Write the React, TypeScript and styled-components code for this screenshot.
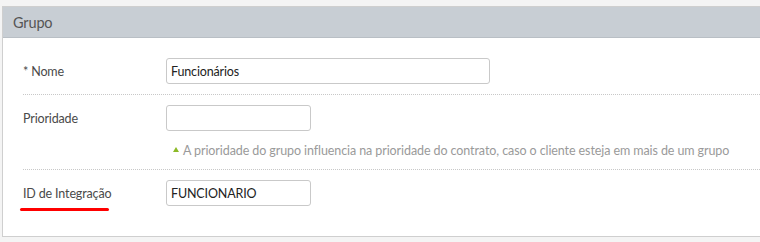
import React from "react";
import styled, { createGlobalStyle } from "styled-components";

const Global = createGlobalStyle`
  html, body { margin: 0; padding: 0; background: #f4f4f4; }
  body { font-family: "Lato", "Liberation Sans", sans-serif; letter-spacing: -0.15px; }
  * { box-sizing: border-box; }
`;

const Page = styled.div`
  padding: 6px 0 0 2px;
  overflow: hidden;
`;

const Panel = styled.section`
  background: #fff;
  border: 1px solid #cfcfcf;
  border-right: none;
`;

const Header = styled.header`
  height: 31px;
  background: #c8ced4;
  border-bottom: 1px solid #b9bfc5;
  padding-left: 10px;
  display: flex;
  align-items: center;
  font-size: 14.5px;
  color: #555;
`;

const Body = styled.div`
  padding: 10px 0 20px 20px;
`;

const Row = styled.div<{ $last?: boolean }>`
  display: grid;
  grid-template-columns: 143px 1fr;
  padding: 10px 0;
  border-bottom: ${(p) => (p.$last ? "none" : "1px dotted #c8c8c8")};
`;

const Label = styled.label`
  position: relative;
  height: 26px;
  display: flex;
  align-items: center;
  font-size: 12.5px;
  color: #4a4a4a;
`;

const Underline = styled.span`
  position: absolute;
  left: -3px;
  top: 28px;
  width: 89px;
  height: 3px;
  border-radius: 2px;
  background: #f00;
`;

const Field = styled.div`
  display: flex;
  flex-direction: column;
`;

const Input = styled.input<{ $w: number }>`
  width: ${(p) => p.$w}px;
  height: 26px;
  border: 1px solid #c9c9c9;
  border-radius: 3px;
  padding: 0 4px;
  font-family: inherit;
  letter-spacing: inherit;
  font-size: 12.5px;
  color: #222;
  background: #fff;
  outline: none;
`;

const Hint = styled.div`
  display: flex;
  align-items: center;
  gap: 4px;
  margin-top: 10px;
  padding-left: 7px;
  height: 18px;
  font-size: 12.5px;
  letter-spacing: -0.09px;
  color: #9a9a9a;
  white-space: nowrap;
`;

const Arrow = styled.span`
  width: 0;
  height: 0;
  border-left: 3.5px solid transparent;
  border-right: 3.5px solid transparent;
  border-bottom: 5px solid #8cba27;
  margin-top: -2px;
`;

export default function App() {
  return (
    <Page>
      <Global />
      <Panel>
        <Header>Grupo</Header>
        <Body>
          <Row>
            <Label>* Nome</Label>
            <Field>
              <Input $w={324} defaultValue="Funcionários" />
            </Field>
          </Row>
          <Row>
            <Label>Prioridade</Label>
            <Field>
              <Input $w={145} defaultValue="" />
              <Hint>
                <Arrow />
                A prioridade do grupo influencia na prioridade do contrato, caso o cliente esteja em mais de um grupo
              </Hint>
            </Field>
          </Row>
          <Row $last>
            <Label>
              ID de Integração
              <Underline />
            </Label>
            <Field>
              <Input $w={145} defaultValue="FUNCIONARIO" />
            </Field>
          </Row>
        </Body>
      </Panel>
    </Page>
  );
}
